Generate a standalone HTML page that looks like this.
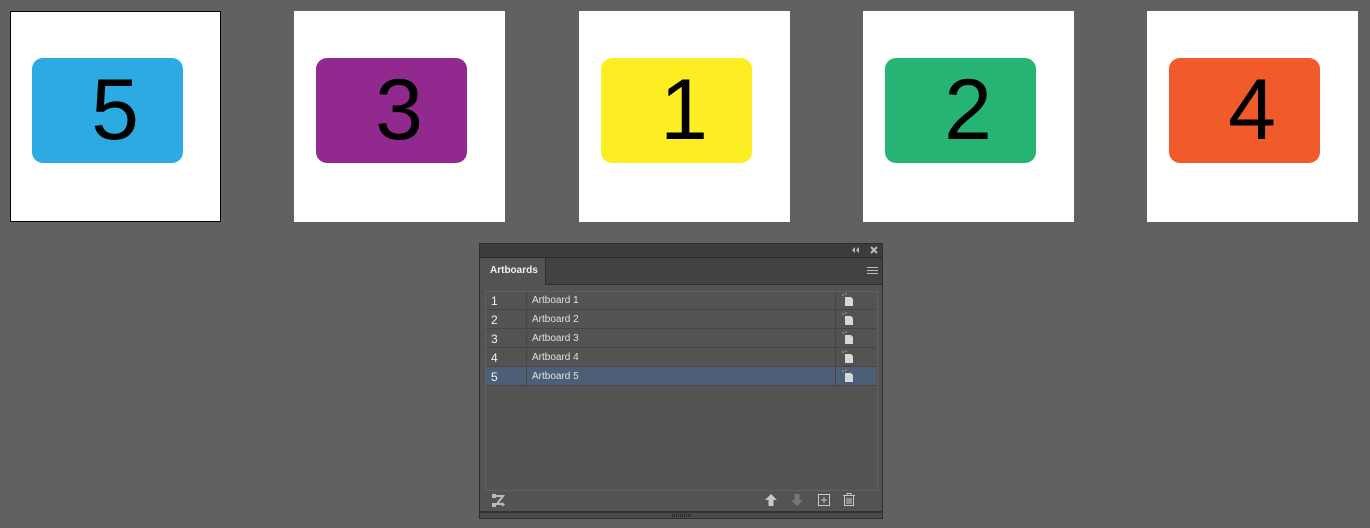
<!DOCTYPE html>
<html><head><style>
body{margin:0;width:1370px;height:528px;background:#616161;position:relative;overflow:hidden;font-family:"Liberation Sans",Arial,sans-serif}
.ab{position:absolute;top:11px;width:211px;height:211px;background:#fff;box-sizing:border-box}
.box{position:absolute;left:22px;top:46px;width:151px;height:105px;border-radius:11px}
.num{position:absolute;left:0;right:0;top:9px;text-align:center;font-size:86px;line-height:86px;color:#000;padding-left:15px}
.p{position:absolute;left:479px;top:243px;width:404px;height:276px;background:#535353;border:1px solid #2e2e2e;box-sizing:border-box}
.row{position:absolute;left:486px;width:390px;height:18px;border-bottom:1px solid #454545;font-size:10px;color:#e6e6e6}
.row .n{position:absolute;left:5px;top:3px;font-size:12px;color:#f0f0f0}
.row .t{position:absolute;left:46px;top:4px;font-size:10px;color:#e0e0e0}
.row .c1{position:absolute;left:40px;top:0;width:1px;height:19px;background:#454545}
.row .c2{position:absolute;left:349px;top:0;width:1px;height:19px;background:#454545}
.row svg{position:absolute;left:356px;top:2px}
</style></head><body>
<div class="ab" style="left:10px;border:1px solid #000"><div class="box" style="background:#2eaae2;left:21px;top:46px"><div class="num">5</div></div></div>
<div class="ab" style="left:294px"><div class="box" style="background:#92298e;top:47px"><div class="num">3</div></div></div>
<div class="ab" style="left:579px"><div class="box" style="background:#fcee22;top:47px"><div class="num">1</div></div></div>
<div class="ab" style="left:863px"><div class="box" style="background:#25b473;top:47px"><div class="num">2</div></div></div>
<div class="ab" style="left:1147px"><div class="box" style="background:#f15a2a;top:47px"><div class="num">4</div></div></div>

<div class="p">
<div style="position:absolute;left:0;top:0;width:402px;height:13px;background:#3c3c3c;border-bottom:1px solid #2a2a2a"></div>
<svg style="position:absolute;left:372px;top:3px" width="8" height="6"><path d="M0 3L3 0V6ZM4 3L7 0V6Z" fill="#bbb"/></svg>
<svg style="position:absolute;left:390px;top:2px" width="8" height="8"><path d="M1 1L7 7M7 1L1 7" stroke="#bbb" stroke-width="2"/></svg>
<div style="position:absolute;left:0;top:14px;width:402px;height:26px;background:#424242;border-bottom:1px solid #2e2e2e"></div>
<div style="position:absolute;left:0;top:14px;width:66px;height:27px;background:#535353;border-right:1px solid #2e2e2e;color:#f0f0f0;font-size:10px;font-weight:bold;line-height:26px;padding-left:10px;box-sizing:border-box">Artboards</div>
<div style="position:absolute;left:387px;top:23px;width:11px;height:1px;background:#bbb;box-shadow:0 3px #bbb,0 6px #bbb"></div>
<div style="position:absolute;left:5px;top:47px;width:393px;height:200px;border:1px solid #606060;box-sizing:border-box;background:#535353"></div>
<div style="position:absolute;left:0;top:267px;width:402px;height:2px;background:#333"></div>
<div style="position:absolute;left:0;top:269px;width:402px;height:5px;background:#4a4a4a"></div>
<div style="position:absolute;left:192px;top:270px;width:19px;height:3px;background:repeating-linear-gradient(90deg,#2a2a2a 0 1px,transparent 1px 2px)"></div>
<svg style="position:absolute;left:12px;top:250px" width="14" height="14"><rect x="0" y="0" width="4" height="4" fill="#bbb"/><rect x="0" y="9" width="4" height="4" fill="#bbb"/><path d="M4 2H11L5 10H11" stroke="#bbb" stroke-width="2" fill="none"/><path d="M10 8L13 10.5L10 13Z" fill="#bbb"/></svg>
<svg style="position:absolute;left:285px;top:250px" width="12" height="12"><path d="M6 0L12 6H8.5V12H3.5V6H0Z" fill="#c8c8c8"/></svg>
<svg style="position:absolute;left:311px;top:250px" width="12" height="12"><path d="M6 12L12 6H8.5V0H3.5V6H0Z" fill="#777"/></svg>
<svg style="position:absolute;left:338px;top:250px" width="12" height="12"><rect x="0.5" y="0.5" width="11" height="11" fill="none" stroke="#c8c8c8"/><path d="M6 3V9M3 6H9" stroke="#c8c8c8"/></svg>
<svg style="position:absolute;left:363px;top:249px" width="12" height="13"><path d="M0 2.5H12M4 2.5V0.5H8V2.5M1.5 2.5V12.5H10.5V2.5M4 5V11M6 5V11M8 5V11" stroke="#c8c8c8" fill="none"/></svg>
</div>

<div class="row" style="top:291px"><span class="n">1</span><div class="c1"></div><span class="t">Artboard 1</span><div class="c2"></div><svg width="12" height="14"><path d="M3 4V13H11V6L9 4Z" fill="#d8d8d8"/><path d="M1 1V3M3 1H5" stroke="#bbb" stroke-width="0.8"/></svg></div>
<div class="row" style="top:310px"><span class="n">2</span><div class="c1"></div><span class="t">Artboard 2</span><div class="c2"></div><svg width="12" height="14"><path d="M3 4V13H11V6L9 4Z" fill="#d8d8d8"/><path d="M1 1V3M3 1H5" stroke="#bbb" stroke-width="0.8"/></svg></div>
<div class="row" style="top:329px"><span class="n">3</span><div class="c1"></div><span class="t">Artboard 3</span><div class="c2"></div><svg width="12" height="14"><path d="M3 4V13H11V6L9 4Z" fill="#d8d8d8"/><path d="M1 1V3M3 1H5" stroke="#bbb" stroke-width="0.8"/></svg></div>
<div class="row" style="top:348px"><span class="n">4</span><div class="c1"></div><span class="t">Artboard 4</span><div class="c2"></div><svg width="12" height="14"><path d="M3 4V13H11V6L9 4Z" fill="#d8d8d8"/><path d="M1 1V3M3 1H5" stroke="#bbb" stroke-width="0.8"/></svg></div>
<div class="row" style="top:367px;background:#4b6076"><span class="n">5</span><div class="c1"></div><span class="t">Artboard 5</span><div class="c2"></div><svg width="12" height="14"><path d="M3 4V13H11V6L9 4Z" fill="#d8d8d8"/><path d="M1 1V3M3 1H5" stroke="#bbb" stroke-width="0.8"/></svg></div>
</body></html>
